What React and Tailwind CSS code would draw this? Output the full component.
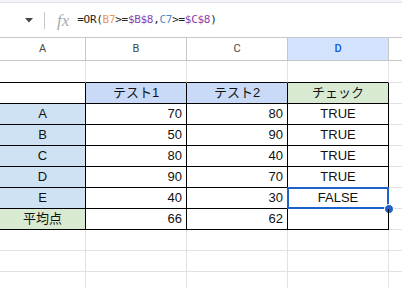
const cols = ['A', 'B', 'C', 'D'];

const rows = [
  { a: '', b: 'テスト1', c: 'テスト2', d: 'チェック', head: true },
  { a: 'A', b: '70', c: '80', d: 'TRUE' },
  { a: 'B', b: '50', c: '90', d: 'TRUE' },
  { a: 'C', b: '80', c: '40', d: 'TRUE' },
  { a: 'D', b: '90', c: '70', d: 'TRUE' },
  { a: 'E', b: '40', c: '30', d: 'FALSE', selected: true },
  { a: '平均点', b: '66', c: '62', d: '', avg: true },
];

const font = { fontFamily: '"Liberation Sans", Arial, "Noto Sans CJK JP", sans-serif' };

function FormulaBar() {
  return (
    <div className="h-[38px] border-b border-[#c7c7c7] bg-white flex flex-col">
      <div className="h-[3px] bg-[#f1f4f9] border-b border-[#e3e3e3]" />
      <div className="flex-1 flex items-center">
        <div className="w-[44px] flex justify-end pr-[11px]">
          <svg width="8" height="5" viewBox="0 0 8 5">
            <path d="M0 0h8L4 4.5z" fill="#444746" />
          </svg>
        </div>
        <div className="w-px h-[17px] bg-[#c4c7c5]" />
        <span
          className="ml-[12px] text-[17px] italic text-[#a8abad] leading-none"
          style={{ fontFamily: '"Liberation Serif", serif' }}
        >
          fx
        </span>
        <span
          className="ml-[8px] text-[11px] text-[#1f1f1f] tracking-[-0.3px]"
          style={{ fontFamily: '"DejaVu Sans Mono", monospace' }}
        >
          =OR(<span className="text-[#f09850]">B7</span>&gt;=<span className="text-[#8a3fb0]">$B$8</span>,
          <span className="text-[#4a8fc9]">C7</span>&gt;=<span className="text-[#8a3fb0]">$C$8</span>)
        </span>
      </div>
    </div>
  );
}

function ColumnHeaders() {
  return (
    <div className="flex h-[23px] border-b border-[#c7c7c7]" style={{ fontFamily: 'Roboto, sans-serif' }}>
      {cols.map((c, i) => (
        <div
          key={c}
          className={
            'h-full flex items-center justify-center text-[11px] border-r border-[#c7c7c7] ' +
            (i === 0 ? 'w-[86px] ' : 'w-[101px] ') +
            (c === 'D' ? 'bg-[#d3e3fd] text-[#0b57d0] font-medium' : 'bg-white text-[#444746]')
          }
        >
          {c}
        </div>
      ))}
      <div className="flex-1 bg-white" />
    </div>
  );
}

function EmptyRow({ h = 'h-[21px]', topOfTable = false }) {
  return (
    <div className={'flex ' + h}>
      {cols.map((c, i) => (
        <div
          key={c}
          className={
            'h-full border-r border-b border-r-[#e2e2e2] ' +
            (topOfTable ? 'border-b-black ' : 'border-b-[#e2e2e2] ') +
            (i === 0 ? 'w-[86px]' : 'w-[101px]')
          }
        />
      ))}
      <div className="flex-1 h-full border-b border-[#e2e2e2]" />
    </div>
  );
}

function DataRow({ row }) {
  const aBg = row.head ? 'bg-white' : row.avg ? 'bg-[#d9ead3]' : 'bg-[#cfe2f3]';
  const base = 'h-full border-r border-b border-black flex items-center text-[13px] text-[#111] ';
  return (
    <div className="flex h-[21px]" style={font}>
      <div className={base + 'w-[86px] justify-center ' + aBg}>{row.a}</div>
      <div className={base + 'w-[101px] ' + (row.head ? 'justify-center bg-[#c9daf8]' : 'justify-end pr-[4px]')}>
        {row.b}
      </div>
      <div className={base + 'w-[101px] ' + (row.head ? 'justify-center bg-[#c9daf8]' : 'justify-end pr-[4px]')}>
        {row.c}
      </div>
      <div className={base + 'w-[101px] justify-center relative ' + (row.head ? 'bg-[#d9ead3]' : '')}>
        {row.d}
        {row.selected && (
          <>
            <div className="absolute left-[-1px] top-[-1px] right-[-1px] bottom-[-1px] border-2 border-[#1f62c9]" />
            <div className="absolute right-[-6px] bottom-[-6px] w-[10px] h-[10px] rounded-full bg-[#1f62c9] border border-white" />
          </>
        )}
      </div>
      <div className="flex-1 h-full border-b border-[#e2e2e2]" />
    </div>
  );
}

export default function App() {
  return (
    <div className="w-[402px] h-[288px] overflow-hidden bg-white">
      <FormulaBar />
      <ColumnHeaders />
      <EmptyRow h="h-[22px]" topOfTable />
      {rows.map((r, i) => (
        <DataRow key={i} row={r} />
      ))}
      <EmptyRow />
      <EmptyRow />
      <EmptyRow />
    </div>
  );
}
